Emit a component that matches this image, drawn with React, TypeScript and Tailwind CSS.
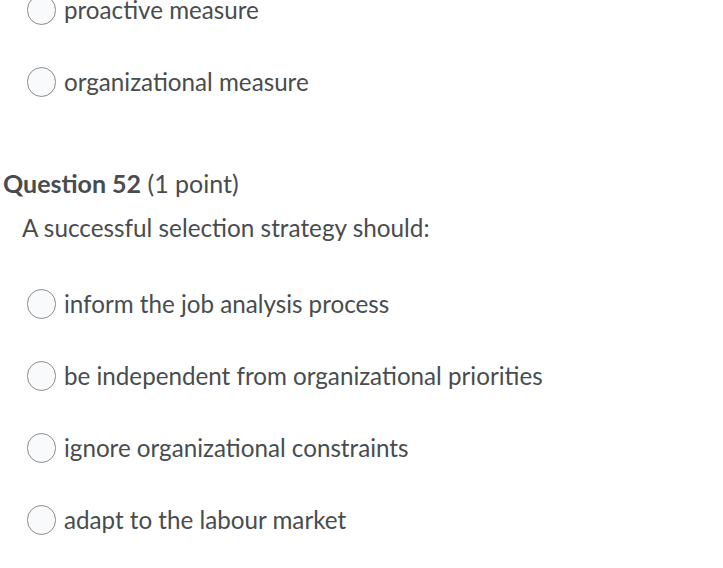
const previous = ["proactive measure", "organizational measure"];
const options = [
  "inform the job analysis process",
  "be independent from organizational priorities",
  "ignore organizational constraints",
  "adapt to the labour market",
];

function Option({ label }: { label: string }) {
  return (
    <label className="flex items-center gap-[8px] h-[30px] cursor-pointer">
      <span className="w-[29px] h-[30px] rounded-full border border-[#8a8a8a] bg-[#f9fafc] shrink-0" />
      <span className="text-[24.2px] leading-[30px] text-[#494c4e]">{label}</span>
    </label>
  );
}

export default function App() {
  return (
    <div
      className="w-[723px] h-[568px] bg-white overflow-hidden"
      style={{ fontFamily: "Lato, 'Noto Sans', sans-serif" }}
    >
      <div className="flex flex-col gap-[42px] pl-[27px] -mt-[5px]">
        {previous.map((p) => (
          <Option key={p} label={p} />
        ))}
      </div>

      <div className="mt-[71px] pl-[3px]">
        <h2 className="text-[25px] leading-[30px] text-[#494c4e]">
          <span className="font-bold">Question 52</span>{" "}
          <span className="font-normal">(1 point)</span>
        </h2>
        <p className="mt-[15px] pl-[19px] text-[24.3px] leading-[30px] text-[#494c4e]">
          A successful selection strategy should:
        </p>
      </div>

      <div className="flex flex-col gap-[42px] pl-[27px] mt-[46px]">
        {options.map((o) => (
          <Option key={o} label={o} />
        ))}
      </div>
    </div>
  );
}
